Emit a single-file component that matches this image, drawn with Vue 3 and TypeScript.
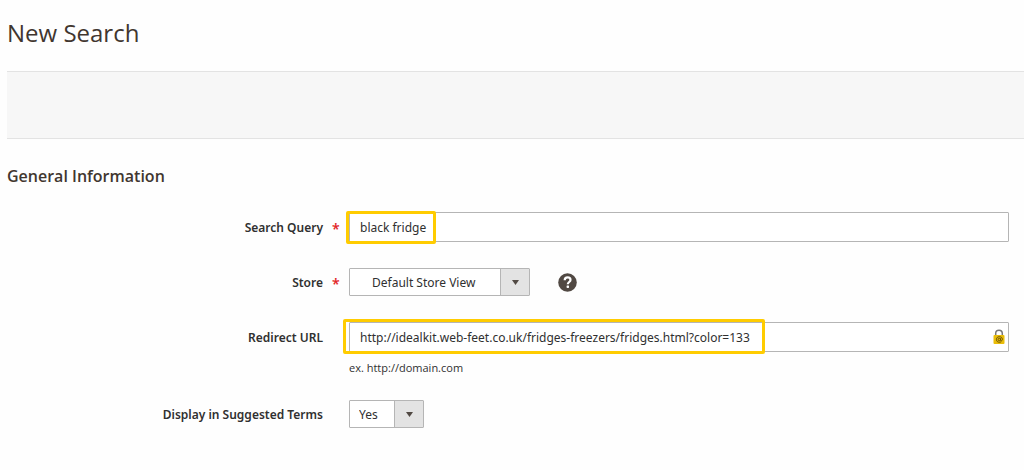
<script setup lang="ts">
import { ref } from 'vue'

const searchQuery = ref<string>('black fridge')
const store = ref<string>('Default Store View')
const redirectUrl = ref<string>('http://idealkit.web-feet.co.uk/fridges-freezers/fridges.html?color=133')
const displayInTerms = ref<string>('Yes')
</script>

<template>
  <main class="page">
    <h1 class="title">New Search</h1>
    <div class="toolbar"></div>
    <form class="form" @submit.prevent>
      <h2 class="legend">General Information</h2>

      <div class="field">
        <label class="label" for="query">Search Query</label>
        <span class="required" aria-hidden="true">*</span>
        <div class="control">
          <input id="query" v-model="searchQuery" class="text" type="text" required />
          <span class="mark mark-query"></span>
        </div>
      </div>

      <div class="field">
        <label class="label" for="store">Store</label>
        <span class="required" aria-hidden="true">*</span>
        <div class="control inline">
          <span class="select store">
            <select id="store" v-model="store">
              <option>Default Store View</option>
            </select>
            <span class="arrow"><svg width="7" height="5" viewBox="0 0 7 5"><path d="M0 0h7L3.5 5z" fill="#514943" /></svg></span>
          </span>
          <button class="help" type="button" aria-label="Help">
            <svg width="19" height="19" viewBox="0 0 19 19">
              <circle cx="9.5" cy="9.5" r="9.3" fill="#514943" />
              <path d="M6.7 7.3C6.7 5.4 7.9 4.4 9.6 4.4c1.7 0 2.9 1 2.9 2.5 0 2.100-2.700 2.100-2.700 4.300" fill="none" stroke="#fff" stroke-width="2.2" />
              <rect x="8.6" y="12.5" width="2.4" height="2.4" rx="0.6" fill="#fff" />
            </svg>
          </button>
        </div>
      </div>

      <div class="field noted">
        <label class="label" for="url">Redirect URL</label>
        <div class="control">
          <input id="url" v-model="redirectUrl" class="text url" type="text" />
          <svg class="lock" width="12" height="16" viewBox="0 0 12 16">
            <path d="M2.7 7V4.600C2.700 2.400 4 1.200 6 1.200s3.300 1.200 3.300 3.400V7" fill="none" stroke="#777" stroke-width="1.5" />
            <rect x="0.5" y="6" width="11" height="9" rx="1" fill="#eabd08" />
            <path d="M8.2 12.800c-2.400 1.200-4.800 0-4.800-2.400 0-1.700 1.300-2.700 3-2.700s3 1 3 2.600c0 1.700-1.700 2-1.900.7l.2-1.800" fill="none" stroke="#66500b" stroke-width="1" />
            <circle cx="6.3" cy="10.5" r="1.2" fill="none" stroke="#66500b" stroke-width="0.9" />
          </svg>
          <span class="mark mark-url"></span>
        </div>
        <p class="note">ex. http://domain.com</p>
      </div>

      <div class="field last">
        <label class="label" for="display">Display in Suggested Terms</label>
        <div class="control inline">
          <span class="select yes">
            <select id="display" v-model="displayInTerms">
              <option>Yes</option>
              <option>No</option>
            </select>
            <span class="arrow"><svg width="7" height="5" viewBox="0 0 7 5"><path d="M0 0h7L3.5 5z" fill="#514943" /></svg></span>
          </span>
        </div>
      </div>
    </form>
  </main>
</template>

<style>
body {
  margin: 0;
  background: #fefefe;
}
</style>

<style scoped>
.page {
  padding: 16px 0 32px 7px;
  font-family: "Noto Sans", "Open Sans", sans-serif;
  font-size: 12px;
  color: #303030;
}

.title {
  margin: 0;
  font-family: "Open Sans", "Noto Sans", sans-serif;
  font-size: 24px;
  line-height: 34px;
  font-weight: 400;
  color: #41362f;
}

.toolbar {
  box-sizing: border-box;
  height: 68px;
  margin-top: 21px;
  background: #f7f7f7;
  border-top: 1px solid #e3e3e3;
  border-bottom: 1px solid #e3e3e3;
}

.form {
  padding-right: 15px;
}

.legend {
  margin: 26px 0 25px;
  font-family: "Open Sans", "Noto Sans", sans-serif;
  font-size: 16px;
  line-height: 22px;
  font-weight: 600;
  color: #41362f;
}

.field {
  display: grid;
  grid-template-columns: 316px 26px 1fr;
  align-items: center;
  margin-bottom: 26px;
}

.label {
  grid-column: 1;
  text-align: right;
  font-weight: 600;
}

.required {
  padding: 4px 0 0 9px;
  font-size: 14px;
  line-height: 20px;
  font-weight: 600;
  color: #e22626;
}

.control {
  position: relative;
  grid-column: 3;
}

.inline {
  display: flex;
  align-items: center;
}

.text {
  display: block;
  box-sizing: border-box;
  width: 100%;
  height: 30px;
  padding: 0 10px;
  border: 1px solid #b5b5b5;
  border-radius: 1px;
  background: #fff;
  font: inherit;
  color: inherit;
}

.url {
  padding-right: 24px;
}

.select {
  position: relative;
  display: block;
}

.select select {
  appearance: none;
  display: block;
  box-sizing: border-box;
  width: 100%;
  height: 28px;
  padding: 0 30px 0 9px;
  border: 1px solid #b5b5b5;
  border-radius: 1px;
  background: #fff;
  font: inherit;
  color: inherit;
}

.store {
  width: 181px;
}

.select.store select {
  padding-left: 22px;
}

.yes {
  width: 75px;
}

.arrow {
  position: absolute;
  top: 1px;
  right: 1px;
  bottom: 1px;
  width: 28px;
  display: flex;
  align-items: center;
  justify-content: center;
  background: #e3e3e3;
  border-left: 1px solid #b5b5b5;
  pointer-events: none;
}

.help {
  display: block;
  margin-left: 28px;
  padding: 0;
  border: 0;
  background: none;
  line-height: 0;
}

.lock {
  position: absolute;
  top: 7px;
  right: 4px;
}

.mark {
  position: absolute;
  box-sizing: border-box;
  border: 3px solid #fc0;
  border-radius: 2px;
  pointer-events: none;
}

.mark-query {
  top: -1px;
  left: -3px;
  width: 90px;
  height: 33px;
}

.mark-url {
  top: -3px;
  left: -6px;
  width: 422px;
  height: 35px;
}

.note {
  grid-column: 3;
  margin: 8px 0 0;
  font-family: "Open Sans", "Noto Sans", sans-serif;
  font-size: 11px;
  line-height: 16px;
}

.noted {
  margin-bottom: 24px;
}

.last {
  margin: 0;
}
</style>
